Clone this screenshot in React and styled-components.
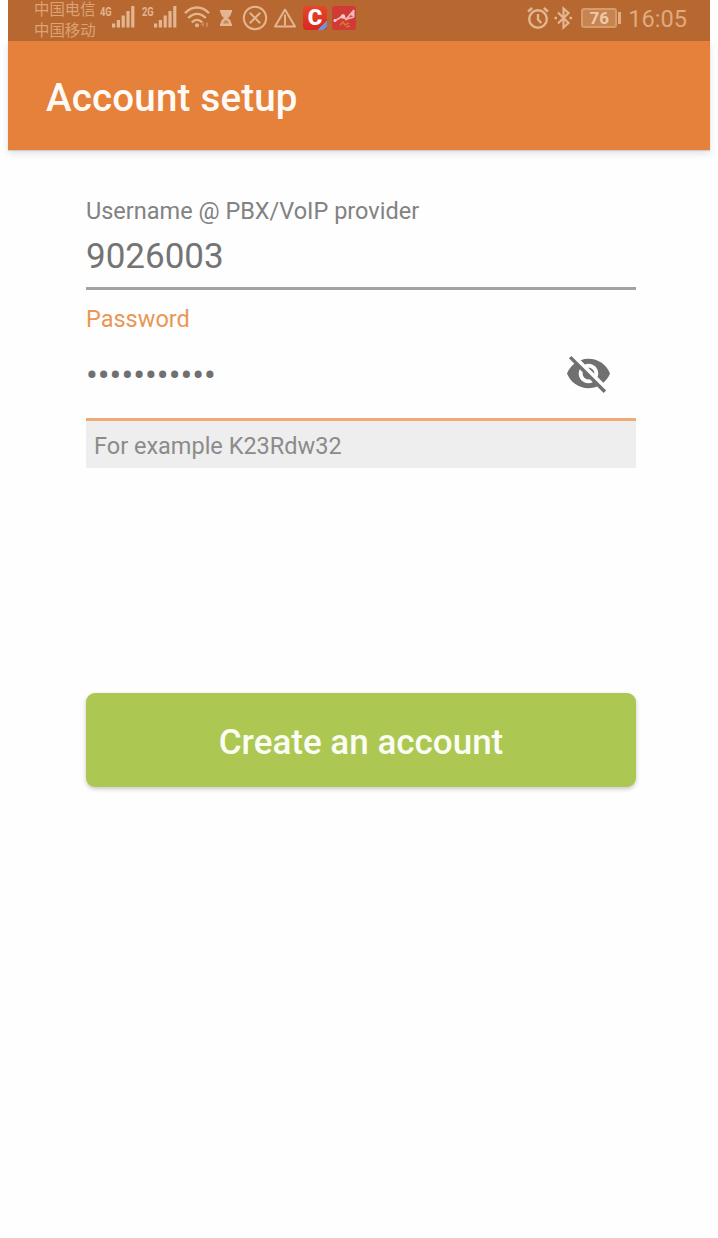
import React from "react";
import styled, { createGlobalStyle } from "styled-components";

const BARS = [4, 7.5, 12, 16.5, 21.5];

const SignalIcon = ({ type }) => (
  <Signal>
    <Network>{type}</Network>
    <svg width="24" height="24" viewBox="0 0 24 24" fill="currentColor">
      {BARS.map((height, i) => (
        <rect key={height} x={i * 4.8} y={22.5 - height} width="3.2" height={height} />
      ))}
    </svg>
  </Signal>
);

const WifiIcon = () => (
  <svg
    width="26"
    height="24"
    viewBox="0 0 26 24"
    fill="none"
    stroke="currentColor"
    strokeWidth="2.3"
  >
    <path d="M1 8.2C8 .6 18 .6 25 8.2" />
    <path d="M4.3 13C9.5 7.4 16.5 7.4 21.7 13" />
    <path d="M7.8 17.4c3.2-3.4 7.2-3.4 10.4 0" />
    <circle cx="13" cy="20.2" r="2" fill="currentColor" stroke="none" />
    <path fill="currentColor" stroke="none" d="M20 17v5l-3.5-2.5zM22 17.5h2v4h-2z" opacity=".45" />
  </svg>
);

const HourglassIcon = () => (
  <svg width="12" height="18" viewBox="0 0 12 18" fill="currentColor">
    <path d="M0 1h12v2.5h-.8c0 2.8-1.4 4.3-3.4 5.5 2 1.2 3.4 2.7 3.4 5.5h.8V17H0v-2.5h.8C.8 11.7 2.2 10.2 4.2 9 2.2 7.8.8 6.3.8 3.5H0z" />
    <path d="M3 14.5c.4-1.8 1.5-2.8 3-3.5 1.5.7 2.6 1.7 3 3.5z" fill="#b66830" opacity=".55" />
  </svg>
);

const CloseCircleIcon = () => (
  <svg
    width="26"
    height="26"
    viewBox="0 0 26 26"
    fill="none"
    stroke="currentColor"
    strokeWidth="2"
  >
    <circle cx="13" cy="13" r="11.2" />
    <path d="M7.8 7.8l10.4 10.4M18.2 7.8L7.8 18.2" />
  </svg>
);

const WarningIcon = () => (
  <svg
    width="24"
    height="22"
    viewBox="0 0 24 22"
    fill="none"
    stroke="currentColor"
    strokeWidth="2"
    strokeLinejoin="round"
  >
    <path d="M12 2.5L22 19.5H2z" />
    <path d="M12 7.5v11" />
  </svg>
);

const StocksIcon = () => (
  <svg width="24" height="24" viewBox="0 0 24 24">
    <rect width="24" height="24" rx="2" fill="#d13b35" />
    <path d="M8 19l3-3 2 3 4-2M14 21l4-1" stroke="#dc7435" strokeWidth="1.5" fill="none" />
    <path
      d="M2 15l5-2.5 4-3 3 4 8-9.5M15 13l7-2"
      stroke="#f0b5b5"
      strokeWidth="1.8"
      fill="none"
    />
    <circle cx="3" cy="14.5" r="1.5" fill="#f5cccc" />
    <circle cx="11" cy="10.5" r="2.2" fill="#f5cccc" />
    <path d="M19 7.5L22.5 4v7l-3-1z" fill="#eebcbc" />
  </svg>
);

const AlarmIcon = () => (
  <svg
    width="22"
    height="24"
    viewBox="0 0 22 24"
    fill="none"
    stroke="currentColor"
    strokeWidth="2.4"
  >
    <circle cx="11" cy="13" r="8.8" />
    <path d="M11 8v5.5l3.3 3.5M1 5.5L5.2 2M21 5.5L16.8 2" />
  </svg>
);

const BluetoothIcon = () => (
  <svg
    width="20"
    height="24"
    viewBox="0 0 20 24"
    fill="none"
    stroke="currentColor"
    strokeWidth="2.2"
  >
    <path d="M5 6.5L15.5 17l-5 4.5v-19l5 4.5L5 17.5" />
    <path d="M1.500 12H4M16.500 12H19" strokeWidth="2.4" />
  </svg>
);

const EyeOffIcon = () => (
  <svg width="47" height="47" viewBox="0 0 24 24" fill="currentColor">
    <path d="M12 7c2.76 0 5 2.24 5 5 0 .65-.13 1.26-.36 1.83l2.92 2.92c1.51-1.26 2.7-2.89 3.43-4.75-1.73-4.39-6-7.5-11-7.5-1.4 0-2.74.25-3.98.7l2.16 2.16C10.74 7.13 11.35 7 12 7zM2 4.27l2.28 2.28.46.46C3.08 8.3 1.78 10.02 1 12c1.73 4.39 6 7.5 11 7.5 1.55 0 3.03-.3 4.38-.84l.42.42L19.73 22 21 20.73 3.27 3 2 4.27zM7.53 9.8l1.55 1.55c-.05.21-.08.43-.08.65 0 1.66 1.34 3 3 3 .22 0 .44-.03.65-.08l1.55 1.55c-.67.33-1.41.53-2.2.53-2.76 0-5-2.24-5-5 0-.79.2-1.53.53-2.2zm4.31-.78l3.15 3.15.02-.16c0-1.66-1.34-3-3-3l-.17.01z" />
  </svg>
);

const App = () => {
  return (
    <Screen>
      <GlobalStyle />
      <StatusBar>
        <Carriers>
          <span>中国电信</span>
          <span>中国移动</span>
        </Carriers>
        <SystemIcons>
          <SignalIcon type="4G" />
          <SignalIcon type="2G" />
          <WifiIcon />
        </SystemIcons>
        <Notifications>
          <HourglassIcon />
          <CloseCircleIcon />
          <WarningIcon />
          <ChatBadge>C</ChatBadge>
          <StocksIcon />
        </Notifications>
        <DeviceState>
          <AlarmIcon />
          <BluetoothIcon />
          <Battery>76</Battery>
          <Clock>16:05</Clock>
        </DeviceState>
      </StatusBar>
      <AppBar>
        <Title>Account setup</Title>
      </AppBar>
      <Form>
        <Field>
          <Label>Username @ PBX/VoIP provider</Label>
          <Value>9026003</Value>
        </Field>
        <Field $active>
          <Label $active>Password</Label>
          <PasswordRow>
            <Dots>•••••••••••</Dots>
            <EyeOffIcon />
          </PasswordRow>
        </Field>
        <Hint>For example K23Rdw32</Hint>
        <SubmitButton type="button">Create an account</SubmitButton>
      </Form>
    </Screen>
  );
};

const GlobalStyle = createGlobalStyle`
  * {
    box-sizing: border-box;
  }

  body {
    margin: 0;
    background: #fefefe;
    font-family: Roboto, "Noto Sans CJK SC", sans-serif;
  }

  svg {
    display: block;
    flex-shrink: 0;
  }
`;

const Screen = styled.div`
  width: 702px;
  height: 1238px;
  margin: 0 8px;
`;

const StatusBar = styled.header`
  display: flex;
  height: 41px;
  padding: 0 23px 0 26px;
  background: #b66830;
  color: #e3b590;
`;

const Carriers = styled.div`
  display: flex;
  flex-direction: column;
  gap: 4px;
  width: 66px;
  font-family: "Noto Sans CJK SC", sans-serif;
  font-size: 15.4px;
  line-height: 17px;
  color: #dda276;
  white-space: nowrap;
`;

const SystemIcons = styled.div`
  display: flex;
  align-items: flex-start;
  padding-top: 5px;
  gap: 6px;
`;

const Signal = styled.div`
  display: flex;
  width: 36px;
`;

const Network = styled.span`
  width: 12px;
  font-size: 13px;
  font-weight: 700;
  line-height: 13px;
  transform: scaleX(0.72);
  transform-origin: left;
`;

const Notifications = styled.div`
  display: flex;
  align-items: center;
  height: 36px;
  margin-left: 10px;

  svg:nth-child(2) {
    margin-left: 10px;
  }

  svg:nth-child(3) {
    margin: 0 6px 0 5px;
  }

  svg:last-child {
    margin-left: 5px;
  }
`;

const ChatBadge = styled.span`
  width: 24px;
  height: 24px;
  border-radius: 4px;
  background: linear-gradient(135deg, transparent 80%, #7292da 80%, #7292da 93%, #c33b32 93%),
    linear-gradient(#e5472a, #d92720);
  color: #fff;
  font-size: 22px;
  font-weight: 900;
  line-height: 24px;
  text-align: center;
`;

const DeviceState = styled.div`
  display: flex;
  align-items: center;
  gap: 4px;
  height: 36px;
  margin-left: auto;
`;

const Battery = styled.span`
  position: relative;
  width: 36px;
  height: 20px;
  margin: 0 7px 0 4px;
  border: 2px solid #d79b6c;
  border-radius: 3px;
  background: #c68452;
  font-size: 17px;
  font-weight: 700;
  line-height: 17px;
  text-align: center;
  color: #f0c9a9;

  &::after {
    content: "";
    position: absolute;
    top: 2px;
    right: -6px;
    width: 3px;
    height: 12px;
    background: #e0ad84;
  }
`;

const Clock = styled.span`
  font-size: 23.6px;
  line-height: 36px;
  padding-top: 1px;
  color: #e0a97f;
`;

const AppBar = styled.div`
  display: flex;
  align-items: center;
  height: 109px;
  padding: 4px 38px 0;
  background: #e5813a;
  box-shadow: 0 4px 7px rgba(0, 0, 0, 0.1), 0 1px 1px rgba(0, 0, 0, 0.12);
`;

const Title = styled.h1`
  margin: 0;
  font-size: 38.5px;
  font-weight: 500;
  letter-spacing: 0.2px;
  color: #fffaf5;
`;

const Form = styled.main`
  display: flex;
  flex-direction: column;
  padding: 47px 74px 0 78px;
`;

const Field = styled.section`
  border-bottom: 3px solid ${({ $active }) => ($active ? "#efaa76" : "#a3a3a3")};
  padding-bottom: ${({ $active }) => ($active ? "21px" : "7px")};
  padding-top: ${({ $active }) => ($active ? "15px" : "0")};
`;

const Label = styled.div`
  font-size: 23.5px;
  line-height: 28px;
  color: ${({ $active }) => ($active ? "#ea9654" : "#828282")};
`;

const Value = styled.div`
  margin-top: 9px;
  font-size: 35px;
  line-height: 46px;
  color: #747474;
`;

const PasswordRow = styled.div`
  display: flex;
  align-items: center;
  justify-content: space-between;
  height: 47px;
  margin-top: 17px;
  padding-right: 24px;
  color: #707070;
`;

const Dots = styled.span`
  padding-top: 4px;
  font-size: 35px;
  line-height: 46px;
`;

const Hint = styled.div`
  height: 47px;
  padding-left: 8px;
  background: #eee;
  font-size: 23.5px;
  line-height: 50px;
  color: #8b8b8b;
`;

const SubmitButton = styled.button`
  height: 94px;
  margin-top: 225px;
  padding: 5px 0 0;
  border: 0;
  border-radius: 9px;
  background: #acc853;
  box-shadow: 0 2px 4px rgba(0, 0, 0, 0.22);
  font-family: inherit;
  font-size: 35px;
  font-weight: 500;
  color: #fbfdf4;
`;

export default App;
